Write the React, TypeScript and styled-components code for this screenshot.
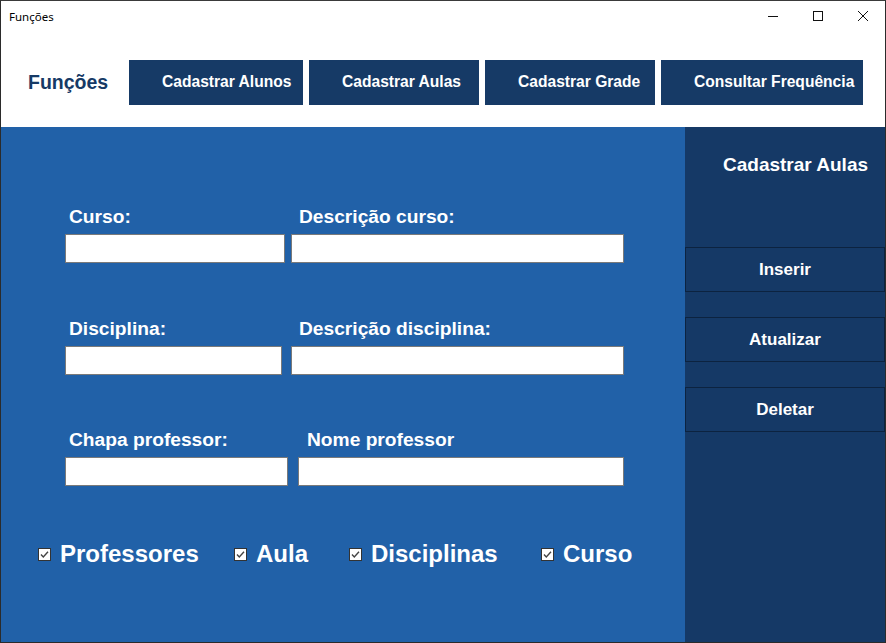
import React from "react";
import styled, { createGlobalStyle } from "styled-components";

const GlobalStyle = createGlobalStyle`
  html, body {
    margin: 0;
    padding: 0;
    background: #2b2b2b;
  }
  * {
    box-sizing: border-box;
  }
`;

const navItems = [
  { label: "Cadastrar Alunos", width: 174 },
  { label: "Cadastrar Aulas", width: 170 },
  { label: "Cadastrar Grade", width: 170 },
  { label: "Consultar Frequência", width: 202 },
];

const fieldRows = [
  {
    gap: 6,
    after: 55,
    fields: [
      { label: "Curso:", width: 220, indent: 4 },
      { label: "Descrição curso:", width: 333, indent: 8 },
    ],
  },
  {
    gap: 9,
    after: 54,
    fields: [
      { label: "Disciplina:", width: 217, indent: 4 },
      { label: "Descrição disciplina:", width: 333, indent: 8 },
    ],
  },
  {
    gap: 10,
    after: 54,
    fields: [
      { label: "Chapa professor:", width: 223, indent: 4 },
      { label: "Nome professor", width: 326, indent: 9 },
    ],
  },
];

const checks = [
  { label: "Professores", width: 196 },
  { label: "Aula", width: 115 },
  { label: "Disciplinas", width: 192 },
  { label: "Curso" },
];

const actions = ["Inserir", "Atualizar", "Deletar"];

function CheckIcon(): React.ReactElement {
  return (
    <svg width="13" height="13" viewBox="0 0 13 13">
      <rect x="0.5" y="0.5" width="12" height="12" fill="#fff" stroke="#333" />
      <path d="M3 6.5 L5.3 9 L10 3.8" fill="none" stroke="#444" strokeWidth="1.4" />
    </svg>
  );
}

export default function App(): React.ReactElement {
  return (
    <>
      <GlobalStyle />
      <Window>
        <TitleBar>
          <WindowTitle>Funções</WindowTitle>
          <Controls>
            <ControlButton aria-label="Minimizar">
              <svg width="12" height="12" viewBox="0 0 12 12">
                <path d="M1 6.5 H11" stroke="#111" strokeWidth="1" />
              </svg>
            </ControlButton>
            <ControlButton aria-label="Maximizar">
              <svg width="12" height="12" viewBox="0 0 12 12">
                <rect x="1.5" y="1.5" width="9" height="9" fill="none" stroke="#111" />
              </svg>
            </ControlButton>
            <ControlButton aria-label="Fechar">
              <svg width="12" height="12" viewBox="0 0 12 12">
                <path d="M1 1 L11 11 M11 1 L1 11" stroke="#111" strokeWidth="1" />
              </svg>
            </ControlButton>
          </Controls>
        </TitleBar>

        <Header>
          <Brand>Funções</Brand>
          <Nav>
            {navItems.map((item) => (
              <NavButton key={item.label} width={item.width}>
                {item.label}
              </NavButton>
            ))}
          </Nav>
        </Header>

        <Main>
          <FormPanel>
            {fieldRows.map((row, i) => (
              <FieldRow key={i} gap={row.gap} after={row.after}>
                {row.fields.map((f) => (
                  <Field key={f.label} width={f.width}>
                    <FieldLabel indent={f.indent}>{f.label}</FieldLabel>
                    <TextInput type="text" />
                  </Field>
                ))}
              </FieldRow>
            ))}
            <CheckRow>
              {checks.map((c) => (
                <CheckItem key={c.label} width={c.width}>
                  <CheckIcon />
                  <span>{c.label}</span>
                </CheckItem>
              ))}
            </CheckRow>
          </FormPanel>

          <SidePanel>
            <SideTitle>Cadastrar Aulas</SideTitle>
            <ActionList>
              {actions.map((a) => (
                <ActionButton key={a}>{a}</ActionButton>
              ))}
            </ActionList>
          </SidePanel>
        </Main>
      </Window>
    </>
  );
}

// Styled components
const Window = styled.div`
  width: 886px;
  height: 643px;
  display: flex;
  flex-direction: column;
  background: #fff;
  border: 1px solid #2b2b2b;
  border-top-color: #3a3a3a;
  overflow: hidden;
  font-family: "Liberation Sans", Arial, sans-serif;
`;

const TitleBar = styled.div`
  height: 32px;
  display: flex;
  align-items: center;
  justify-content: space-between;
  padding-left: 8px;
  background: #fff;
`;

const WindowTitle = styled.span`
  font-family: "Noto Sans", "Open Sans", sans-serif;
  font-size: 11.5px;
  color: #000;
  margin-top: -1px;
`;

const Controls = styled.div`
  display: flex;
  height: 100%;
  margin-top: -2px;
`;

const ControlButton = styled.div`
  width: 45px;
  height: 100%;
  display: flex;
  align-items: center;
  justify-content: center;
`;

const Header = styled.div`
  height: 94px;
  display: flex;
  align-items: center;
  padding: 4px 0 0 27px;
  background: #fff;
`;

const Brand = styled.div`
  width: 101px;
  font-size: 19.5px;
  font-weight: bold;
  color: #163a66;
`;

const Nav = styled.div`
  display: flex;
  gap: 6px;
`;

const NavButton = styled.div<{ width: number }>`
  width: ${({ width }) => width}px;
  height: 45px;
  display: flex;
  align-items: center;
  padding-left: 33px;
  background: #163a66;
  color: #fff;
  font-size: 15.6px;
  font-weight: bold;
  white-space: nowrap;
`;

const Main = styled.div`
  flex: 1;
  display: flex;
`;

const FormPanel = styled.div`
  width: 684px;
  background: #2161a8;
  padding: 79px 0 0 64px;
  display: flex;
  flex-direction: column;
`;

const FieldRow = styled.div<{ gap: number; after: number }>`
  display: flex;
  gap: ${({ gap }) => gap}px;
  margin-bottom: ${({ after }) => after}px;
`;

const Field = styled.div<{ width: number }>`
  width: ${({ width }) => width}px;
  display: flex;
  flex-direction: column;
  gap: 7px;
`;

const FieldLabel = styled.label<{ indent: number }>`
  margin-left: ${({ indent }) => indent}px;
  height: 21px;
  line-height: 21px;
  color: #fff;
  font-size: 19.2px;
  font-weight: bold;
  white-space: nowrap;
`;

const TextInput = styled.input`
  width: 100%;
  height: 29px;
  border: 1px solid #7a7a7a;
  background: #fff;
  outline: none;
  margin: 0;
  padding: 0 4px;
`;

const CheckRow = styled.div`
  display: flex;
  align-items: center;
  margin-left: -27px;
`;

const CheckItem = styled.div<{ width?: number }>`
  width: ${({ width }) => (width ? `${width}px` : "auto")};
  display: flex;
  align-items: center;
  gap: 9px;
  color: #fff;
  font-size: 24px;
  font-weight: bold;
  white-space: nowrap;
  svg {
    flex-shrink: 0;
  }
`;

const SidePanel = styled.div`
  flex: 1;
  background: #153966;
  display: flex;
  flex-direction: column;
`;

const SideTitle = styled.div`
  height: 76px;
  padding: 27px 0 0 38px;
  color: #fff;
  font-size: 19px;
  font-weight: bold;
`;

const ActionList = styled.div`
  margin-top: 44px;
  display: flex;
  flex-direction: column;
  gap: 25px;
`;

const ActionButton = styled.div`
  height: 45px;
  display: flex;
  align-items: center;
  justify-content: center;
  border: 1px solid #0c2340;
  color: #fff;
  font-size: 17px;
  font-weight: bold;
`;
